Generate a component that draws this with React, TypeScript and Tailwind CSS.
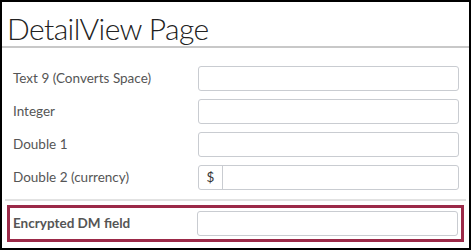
const fields = ['Text 9 (Converts Space)', 'Integer', 'Double 1']

const font = { fontFamily: '"Source Sans Pro", Lato, "Noto Sans", sans-serif' }

export default function App() {
  return (
    <div className="w-[471px] h-[250px] border-2 border-black bg-white overflow-hidden" style={font}>
      {/* header */}
      <div className="h-[46px] pl-[5px] flex items-end pb-[3px] border-b-2 border-[#c8c8c8]">
        <h1 className="text-[30px] font-light leading-none tracking-[-0.6px] text-[#222]">DetailView Page</h1>
      </div>

      <div className="pt-[18px] pl-[11px] pr-[10px] flex flex-col gap-[8px]">
        {fields.map((f) => (
          <div key={f} className="flex items-center justify-between h-[25px]">
            <span className="text-[13.5px] text-[#555]">{f}</span>
            <input className="w-[261px] h-[25px] border border-[#c9ccd1] rounded-[3px] outline-none" />
          </div>
        ))}
        <div className="flex items-center justify-between h-[25px]">
          <span className="text-[13.5px] text-[#555]">Double 2 (currency)</span>
          <div className="w-[261px] h-[25px] border border-[#c9ccd1] rounded-[3px] flex">
            <span className="w-[24px] border-r border-[#c9ccd1] flex items-center justify-center text-[13.5px] text-[#333]">$</span>
            <input className="flex-1 outline-none" />
          </div>
        </div>
      </div>

      <div className="mx-[3px] mt-[9px] border-t-2 border-[#e2e2e2]" />

      <div className="mx-[5px] mt-[4px] h-[37px] border-[3px] border-[#9b2948] flex items-center justify-between pl-[3px] pr-[3px]">
        <span className="text-[13.5px] font-bold text-[#555]">Encrypted DM field</span>
        <input className="w-[261px] h-[25px] border border-[#c9ccd1] rounded-[3px] outline-none" />
      </div>
    </div>
  )
}
